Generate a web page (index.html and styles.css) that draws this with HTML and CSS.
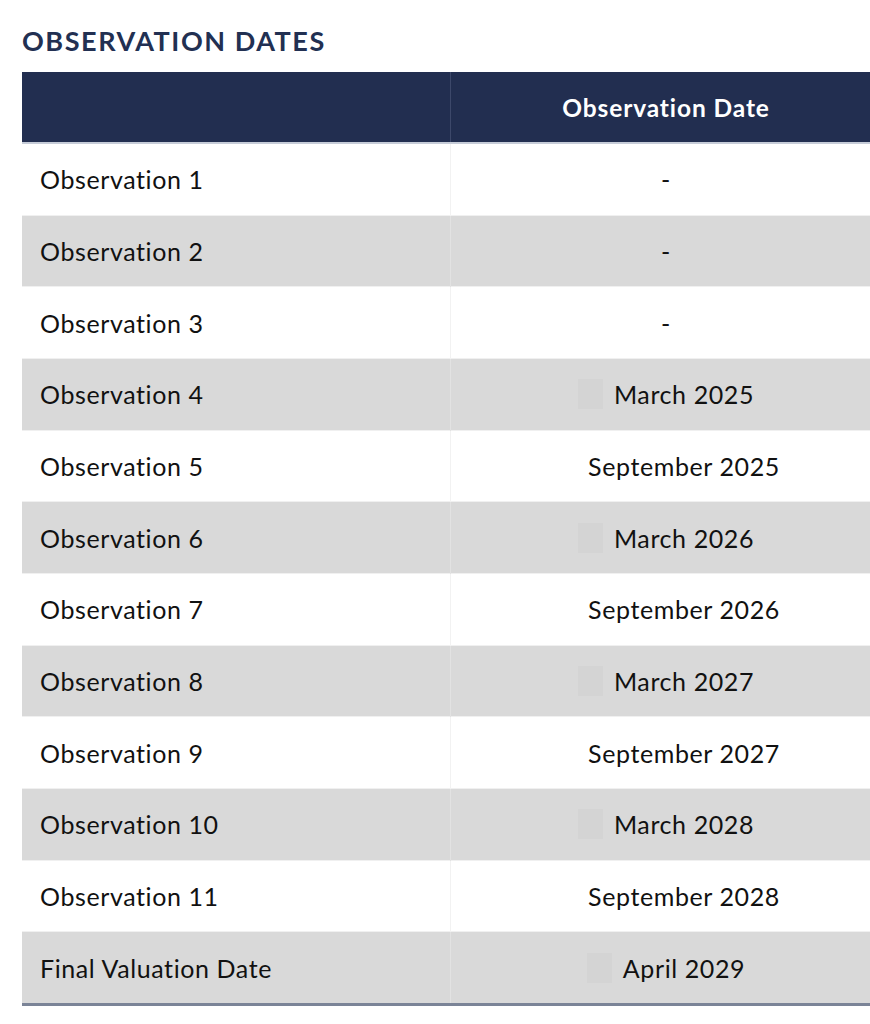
FILE: index.html
```html
<!DOCTYPE html>
<html>
<head>
<meta charset="utf-8">
<link rel="stylesheet" href="styles.css">
</head>
<body>
<section class="panel">
  <h2 class="title">OBSERVATION DATES</h2>
  <table class="dates">
    <thead>
      <tr><th class="col-label"></th><th class="col-date">Observation Date</th></tr>
    </thead>
    <tbody>
      <tr><td class="label">Observation 1</td><td class="date">-</td></tr>
      <tr class="alt"><td class="label">Observation 2</td><td class="date">-</td></tr>
      <tr><td class="label">Observation 3</td><td class="date">-</td></tr>
      <tr class="alt"><td class="label">Observation 4</td><td class="date"><span class="day"></span>March 2025</td></tr>
      <tr><td class="label">Observation 5</td><td class="date"><span class="day"></span>September 2025</td></tr>
      <tr class="alt"><td class="label">Observation 6</td><td class="date"><span class="day"></span>March 2026</td></tr>
      <tr><td class="label">Observation 7</td><td class="date"><span class="day"></span>September 2026</td></tr>
      <tr class="alt"><td class="label">Observation 8</td><td class="date"><span class="day"></span>March 2027</td></tr>
      <tr><td class="label">Observation 9</td><td class="date"><span class="day"></span>September 2027</td></tr>
      <tr class="alt"><td class="label">Observation 10</td><td class="date"><span class="day"></span>March 2028</td></tr>
      <tr><td class="label">Observation 11</td><td class="date"><span class="day"></span>September 2028</td></tr>
      <tr class="alt last"><td class="label">Final Valuation Date</td><td class="date"><span class="day"></span>April 2029</td></tr>
    </tbody>
  </table>
</section>
</body>
</html>
```

FILE: styles.css
```css
html, body {
  margin: 0;
  padding: 0;
  background: #ffffff;
  overflow: hidden;
}
body {
  font-family: Lato, "Open Sans", "Liberation Sans", sans-serif;
  color: #111111;
}
.panel {
  padding: 26px 0 0 22px;
  width: 859px;
}
.title {
  margin: 0 0 16px 0;
  font-size: 27px;
  font-weight: 700;
  color: #223052;
  letter-spacing: 1.55px;
  line-height: 30px;
}
.dates {
  width: 859px;
  border-collapse: collapse;
  table-layout: fixed;
}
.col-label { width: 428px; }
.dates thead th {
  background: #222e50;
  color: #ffffff;
  height: 70px;
  padding: 0;
  font-size: 24.5px;
  font-weight: 700;
  letter-spacing: 0.9px;
  text-align: center;
  border-bottom: 2px solid #c6ccd8;
}
.dates thead th.col-label {
  border-right: 1px solid #3d486a;
}
.dates td {
  height: 70.67px;
  padding: 0;
  font-size: 25px;
  line-height: 30px;
  letter-spacing: 0.6px;
  vertical-align: middle;
  border-top: 1px solid #f0f0f0;
}
.dates td.label {
  padding-left: 18px;
  border-right: 1px solid #f2f2f2;
}
.dates td.date {
  text-align: center;
}
.dates tr.alt td {
  background: #d9d9d9;
}
.dates tr.alt td.label {
  border-right: 1px solid #e2e2e2;
}
.dates tr.last td {
  border-bottom: 3px solid #7b8497;
}
.day {
  display: inline-block;
  width: 25px;
  height: 30px;
  margin-right: 11px;
  vertical-align: top;
  background: #ffffff;
}
.alt .day {
  background: #d4d4d4;
}
```
